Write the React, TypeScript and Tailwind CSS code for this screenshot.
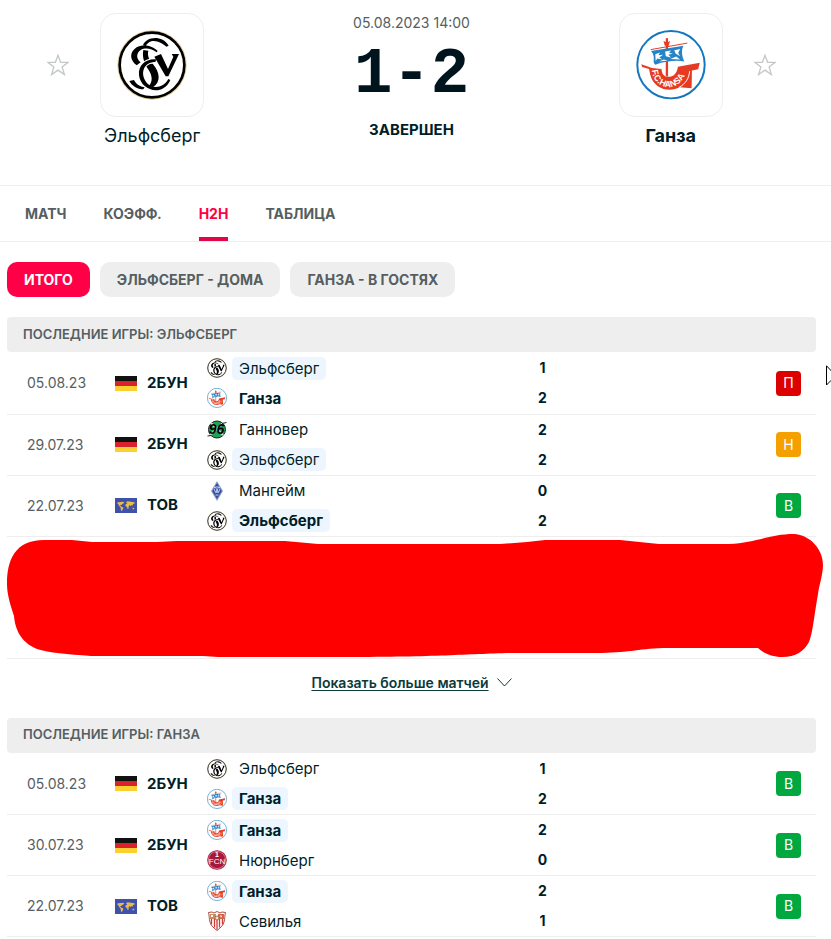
import React, { FC } from 'react'

type CrestName = 'elf' | 'hansa' | 'hannover' | 'mannheim' | 'nurnberg' | 'sevilla'
type Outcome = 'П' | 'Н' | 'В'

type Team = {
  name: string
  crest: CrestName
  score: number
  current?: boolean
  winner?: boolean
}

type Match = {
  date: string
  league: string
  flag: 'de' | 'world'
  teams: Team[]
  outcome: Outcome
}

const elfMatches: Match[] = [
  {
    date: '05.08.23',
    league: '2БУН',
    flag: 'de',
    teams: [
      { name: 'Эльфсберг', crest: 'elf', score: 1, current: true },
      { name: 'Ганза', crest: 'hansa', score: 2, winner: true },
    ],
    outcome: 'П',
  },
  {
    date: '29.07.23',
    league: '2БУН',
    flag: 'de',
    teams: [
      { name: 'Ганновер', crest: 'hannover', score: 2 },
      { name: 'Эльфсберг', crest: 'elf', score: 2, current: true },
    ],
    outcome: 'Н',
  },
  {
    date: '22.07.23',
    league: 'ТОВ',
    flag: 'world',
    teams: [
      { name: 'Мангейм', crest: 'mannheim', score: 0 },
      { name: 'Эльфсберг', crest: 'elf', score: 2, current: true, winner: true },
    ],
    outcome: 'В',
  },
]

const hansaMatches: Match[] = [
  {
    date: '05.08.23',
    league: '2БУН',
    flag: 'de',
    teams: [
      { name: 'Эльфсберг', crest: 'elf', score: 1 },
      { name: 'Ганза', crest: 'hansa', score: 2, current: true, winner: true },
    ],
    outcome: 'В',
  },
  {
    date: '30.07.23',
    league: '2БУН',
    flag: 'de',
    teams: [
      { name: 'Ганза', crest: 'hansa', score: 2, current: true, winner: true },
      { name: 'Нюрнберг', crest: 'nurnberg', score: 0 },
    ],
    outcome: 'В',
  },
  {
    date: '22.07.23',
    league: 'ТОВ',
    flag: 'world',
    teams: [
      { name: 'Ганза', crest: 'hansa', score: 2, current: true, winner: true },
      { name: 'Севилья', crest: 'sevilla', score: 1 },
    ],
    outcome: 'В',
  },
]

const outcomeColor: Record<Outcome, string> = {
  П: 'bg-[#dc0000]',
  Н: 'bg-[#f3a000]',
  В: 'bg-[#00a83f]',
}

const ElfCrest: FC = () => (
  <svg viewBox="5 4 210 210" className="size-full" aria-hidden="true">
    <circle cx="110" cy="109" r="104" fill="#e2cf9f" />
    <circle cx="110" cy="109" r="97" fill="#fff" stroke="#000" strokeWidth="8" />
    <path d="M83 50C92 24 140 18 160 51L153 54C140 44 124 34 108 38C100 40 94 46 91 53Z" />
    <path d="M127 67C112 50 82 45 64 56C42 70 42 94 64 110L76 101C62 90 62 74 76 64C90 56 110 60 124 71Z" />
    <path d="M84 64L99 66C95 82 102 92 112 105C134 130 138 160 112 176L100 172C114 158 110 140 100 124C86 104 80 84 84 64Z" />
    <path
      d="M119 97C92 94 76 114 78 140C80 158 88 168 98 174"
      fill="none"
      stroke="#fff"
      strokeWidth="16"
    />
    <path d="M122 92C90 90 68 110 71 140C76 186 142 206 165 154L159 151C142 184 94 184 84 142C80 118 94 100 121 99Z" />
    <path d="M42 157L56 154C62 166 74 174 88 176L84 182C66 182 50 172 42 157Z" />
    <path d="M117 84L137 76L158 121L174 84L169 76H191L159 143H151Z" />
  </svg>
)

const HansaCrest: FC<{ id: string }> = ({ id }) => (
  <svg viewBox="107 88 214 214" className="size-full" aria-hidden="true">
    <circle cx="214" cy="194" r="103" fill="#fff" stroke="#1277bf" strokeWidth="6" />
    <path d="M198 113H205V230H198Z" fill="#e63b22" />
    <path d="M191 121L197 125L201 121L206 125L211 121L207 136H195Z" fill="#e63b22" />
    <path d="M152 148L264 128" stroke="#e63b22" strokeWidth="3" />
    <path
      d="M153 152L252 136C244 152 248 170 255 184C232 180 200 182 166 194C154 184 170 172 153 152Z"
      fill="#2583c8"
    />
    <path
      d="M166 162l14-5l-4 8l14-1l-12 8l10 6l-16-3l-5 8zM196 154l18-3l-6 7l12 2l-14 4l8 8l-16-4zM224 150l18-4l-6 12l6 10l-14-8zM178 184l14-6l12 3zM212 177l18-8l12 9z"
      fill="#fff"
    />
    <path
      d="M123 193L156 204L185 207C186 224 194 231 205 231C222 231 233 220 235 200L302 188L297 208L278 212L277 266L240 263C213 278 163 273 150 223L147 207L126 201Z"
      fill="#e63b22"
    />
    <path d="M271 214C269 236 258 253 238 264" fill="none" stroke="#fff" strokeWidth="3" />
    <path id={id} d="M155 208C160 280 252 284 264 200" fill="none" />
    <text fill="#fff" className="font-['Liberation_Sans'] text-[27px] font-bold">
      <textPath href={`#${id}`} startOffset="3">
        F.C.HANSA
      </textPath>
    </text>
  </svg>
)

const HannoverCrest: FC = () => (
  <svg viewBox="0 0 20 20" className="size-full" aria-hidden="true">
    <circle cx="10" cy="9.500" r="8.500" fill="#1fa456" stroke="#222" strokeWidth="1" />
    <path d="M3 15L16 3M4 3L16 15" stroke="#bfe5cd" strokeWidth="2" />
    <path d="M.5 16L4 15.500M15 3.500L19.500 2.500" stroke="#222" strokeWidth="1" />
    <text
      x="9.500"
      y="14"
      textAnchor="middle"
      fill="#000"
      className="font-['Liberation_Sans'] text-[14px] font-bold italic"
    >
      96
    </text>
  </svg>
)

const MannheimCrest: FC = () => (
  <svg viewBox="0 0 20 20" className="size-full" aria-hidden="true">
    <path d="M10 0L16 10L10 20L4 10Z" fill="#8fa0d2" />
    <path d="M10 2L14.800 10L10 18L5.200 10Z" fill="#32509f" />
    <path d="M7 8l2 4l1-4l1 4l2-4M10 5v3M8.500 14h3" fill="none" stroke="#c4cfec" strokeWidth="1" />
    <circle cx="8" cy="6.500" r="1" fill="#c4cfec" />
    <circle cx="12" cy="6.500" r="1" fill="#c4cfec" />
  </svg>
)

const NurnbergCrest: FC = () => (
  <svg viewBox="0 0 20 20" className="size-full" aria-hidden="true">
    <circle cx="10" cy="10" r="9.800" fill="#a9173a" />
    <circle cx="10" cy="10" r="8.600" fill="none" stroke="#e6b8c4" strokeWidth=".6" />
    <g fill="#fff" textAnchor="middle">
      <text x="10" y="7" className="font-['Liberation_Sans'] text-[7px] font-bold">
        1
      </text>
      <text x="10" y="14" className="font-['Liberation_Sans'] text-[8px]">
        FCN
      </text>
    </g>
  </svg>
)

const SevillaCrest: FC = () => (
  <svg viewBox="0 0 20 20" className="size-full" aria-hidden="true">
    <path
      d="M1.500 1.500L5 1L7 2L10 .5L13 2L15 1L18.500 1.500C17.500 5 18 8 17 11C16 15 13 17 10 19.500C7 17 4 15 3 11C2 8 2.500 5 1.500 1.500Z"
      fill="#fff"
      stroke="#a33b2c"
      strokeWidth=".9"
    />
    <path d="M4.500 8V13.500M7.500 8V16.500M10 8V18.500M12.500 8V16.500M15.500 8V13.500" stroke="#d33a35" strokeWidth="1.300" />
    <path d="M3 3H9V8H3Z" fill="#c98c62" />
    <path d="M11 3H17V8H11Z" fill="#d8614e" />
    <circle cx="10" cy="7" r="2" fill="#f3e3c0" stroke="#8d4a2a" strokeWidth=".7" />
    <path d="M4 4h2v2H4zM13 4l2 1l-1 2z" fill="#fff" />
  </svg>
)

const Crest: FC<{ name: CrestName; id: string }> = ({ name, id }) => {
  switch (name) {
    case 'elf':
      return <ElfCrest />
    case 'hansa':
      return <HansaCrest id={id} />
    case 'hannover':
      return <HannoverCrest />
    case 'mannheim':
      return <MannheimCrest />
    case 'nurnberg':
      return <NurnbergCrest />
    case 'sevilla':
      return <SevillaCrest />
  }
}

const Flag: FC<{ type: Match['flag'] }> = ({ type }) =>
  type === 'de' ? (
    <svg viewBox="0 0 22 15" className="h-[15px] w-[22px] shrink-0" aria-hidden="true">
      <path d="M0 0H22V5H0Z" fill="#111" />
      <path d="M0 5H22V10H0Z" fill="#d8232a" />
      <path d="M0 10H22V15H0Z" fill="#fdd032" />
    </svg>
  ) : (
    <svg viewBox="0 0 66 45" className="h-[15px] w-[22px] shrink-0" aria-hidden="true">
      <path d="M0 0H66V45H0Z" fill="#3f51ab" />
      <path
        d="M5 15L10 13L25 11L28 14L22 18L18 22L14 20L19 26L24 28L25 31L21 38L18 38L17 29L12 23L9 17ZM33 13L38 10L48 11L58 13L60 16L54 18L53 23L49 21L47 25L44 21L41 25L41 31L38 34L36 27L31 24L32 19L37 17ZM52 30L57 29L58 34L53 34Z"
        fill="#e6bd4d"
      />
    </svg>
  )

const FavouriteButton: FC<{ team: string }> = ({ team }) => (
  <button type="button" aria-label={`Добавить в избранное: ${team}`}>
    <svg viewBox="0 0 22 22" className="size-[22px]" fill="none" stroke="#c3c7c8" strokeWidth="1.300">
      <path d="M11 1.200L13.600 8.300H21.200L15.100 12.900L17.400 20.600L11 16.100L4.600 20.600L6.900 12.900L.8 8.300H8.400Z" />
    </svg>
  </button>
)

const HeaderTeam: FC<{ name: string; winner?: boolean; children: React.ReactNode }> = ({
  name,
  winner,
  children,
}) => (
  <div className="flex flex-col items-center">
    <div className="flex size-[104px] items-center justify-center rounded-2xl border border-[#eee]">
      <div className="size-[70px]">{children}</div>
    </div>
    <a
      href="#team"
      className={
        winner
          ? 'mt-[7px] text-lg leading-6 font-bold'
          : 'mt-[7px] text-lg leading-6'
      }
    >
      {name}
    </a>
  </div>
)

const MatchRow: FC<{ match: Match; id: string }> = ({ match, id }) => (
  <tr className="border-b border-[#eee]">
    <td className="h-[61px] pl-5 text-sm text-[#555e61]">{match.date}</td>
    <td>
      <div className="flex items-center gap-2.5 text-[15px] font-bold">
        <Flag type={match.flag} />
        {match.league}
      </div>
    </td>
    <td>
      {match.teams.map((team, i) => (
        <div key={team.name} className="flex h-[30px] items-center gap-[5px]">
          <span className="size-5 shrink-0">
            <Crest name={team.crest} id={`${id}-${i}`} />
          </span>
          <span
            className={`rounded-[5px] px-[7px] text-[15px] leading-[23px] ${team.current ? 'bg-[#edf6ff]' : ''} ${
              team.winner ? 'font-bold' : ''
            }`}
          >
            {team.name}
          </span>
        </div>
      ))}
    </td>
    <td className="text-center text-sm leading-[30px] font-bold">
      {match.teams.map((team) => (
        <div key={team.name}>{team.score}</div>
      ))}
    </td>
    <td className="pr-[15px]">
      <div
        className={`ml-auto flex size-[25px] items-center justify-center rounded text-sm text-white ${outcomeColor[match.outcome]}`}
      >
        {match.outcome}
      </div>
    </td>
  </tr>
)

const Scribble: FC = () => (
  <tr className="border-b border-[#eee]">
    <td colSpan={5} className="relative h-[122px]">
      <svg
        viewBox="0 0 816 124"
        preserveAspectRatio="none"
        className="absolute -top-[3px] left-0 h-[124px] w-[calc(100%+7px)]"
        aria-hidden="true"
      >
        <path
          d="M37 6H65L85 8H150L170 7H278L311 10H493L520 8L538 6H613L652 10H722C750 9 762 0 787 0C803 1 816 15 816 31C816 40 812 52 811 60C807 82 806 98 802 108C797 117 789 123 775 123C765 123 756 119 751 114H656C630 115 620 119 589 119H503C460 120 430 123 338 123H211L196 122H84C60 120 42 119 30 115C13 108 8 94 7 82C3 70 0 60 0 50C0 26 8 6 37 6Z"
          fill="#f00"
        />
      </svg>
    </td>
  </tr>
)

const MatchSection: FC<{ title: string; id: string; matches: Match[]; children?: React.ReactNode }> = ({
  title,
  id,
  matches,
  children,
}) => (
  <section>
    <h2 className="mb-px flex h-[35px] items-center rounded bg-[#eee] px-4 text-[13px] font-semibold text-[#555e61] uppercase">
      {title}
    </h2>
    <table className="w-full table-fixed" aria-label={title}>
      <colgroup>
        <col className="w-[108px]" />
        <col className="w-[92px]" />
        <col className="w-[38%]" />
        <col className="w-14" />
        <col />
      </colgroup>
      <tbody>
        {matches.map((match, i) => (
          <MatchRow key={match.date} match={match} id={`${id}-${i}`} />
        ))}
        {children}
      </tbody>
    </table>
  </section>
)

const tabs = ['Матч', 'Коэфф.', 'H2H', 'Таблица']
const filters = ['Итого', 'Эльфсберг - Дома', 'Ганза - В гостях']

export default function App() {
  return (
    <div className="relative overflow-x-hidden bg-white font-['Inter','Noto_Sans',sans-serif] text-[#001e28]">
      <header className="grid grid-cols-[37fr_26fr_37fr] pt-[13px] pr-2">
        <div className="grid grid-cols-[1fr_104px_1fr]">
          <div className="flex h-[104px] items-center justify-end pr-[31px]">
            <FavouriteButton team="Эльфсберг" />
          </div>
          <HeaderTeam name="Эльфсберг">
            <ElfCrest />
          </HeaderTeam>
        </div>
        <div className="flex flex-col items-center">
          <time className="text-sm leading-5 text-[#555e61]">05.08.2023 14:00</time>
          <div className="mt-1 font-['Liberation_Mono',monospace] text-[64px] leading-[76px] font-bold text-[#00141e]">
            1-2
          </div>
          <div className="mt-[7px] text-[15px] leading-5 font-bold uppercase">Завершен</div>
        </div>
        <div className="grid grid-cols-[1fr_104px_1fr]">
          <div className="col-start-2">
            <HeaderTeam name="Ганза" winner>
              <HansaCrest id="header-hansa" />
            </HeaderTeam>
          </div>
          <div className="flex h-[104px] items-center pl-[31px]">
            <FavouriteButton team="Ганза" />
          </div>
        </div>
      </header>

      <nav className="mt-[37px] flex h-[57px] gap-[37px] border-y border-[#eee] px-[25px] text-sm font-bold text-[#555e61] uppercase">
        {tabs.map((tab) => (
          <a
            key={tab}
            href="#tab"
            className={
              tab === 'H2H'
                ? 'flex items-center rounded-t-sm border-t-4 border-b-4 border-t-transparent border-b-[#e00747] text-[#ff0046]'
                : 'flex items-center'
            }
          >
            {tab}
          </a>
        ))}
      </nav>

      <main className="pr-[15px] pl-[7px]">
        <div className="my-5 flex gap-2.5">
          {filters.map((filter, i) => (
            <button
              key={filter}
              type="button"
              className={`h-[35px] rounded-[10px] px-[17px] text-sm font-bold uppercase ${
                i === 0 ? 'bg-[#ff0046] text-white' : 'bg-[#eee] text-[#555e61]'
              }`}
            >
              {filter}
            </button>
          ))}
        </div>

        <MatchSection title="Последние игры: Эльфсберг" id="elf" matches={elfMatches}>
          <Scribble />
        </MatchSection>

        <div className="flex justify-center pt-3.5 pb-[25px]">
          <a href="#more" className="flex items-center gap-2 text-sm leading-5 font-semibold text-[#0c3a3a]">
            <span className="underline underline-offset-2">Показать больше матчей</span>
            <svg viewBox="0 0 15 9" className="h-[9px] w-[15px]" fill="none" stroke="currentColor" aria-hidden="true">
              <path d="M.5 .5L7.500 8L14.500 .5" />
            </svg>
          </a>
        </div>

        <MatchSection title="Последние игры: Ганза" id="hansa" matches={hansaMatches} />
      </main>

      {/* mouse pointer at the edge of the page */}
      <svg
        viewBox="0 0 14 21"
        className="absolute top-[365px] -right-[9px] h-[21px] w-[14px]"
        fill="#fff"
        stroke="#000"
        aria-hidden="true"
      >
        <path d="M.5 .8V20L5 15.500L8 20.500L10.500 19L8 14.500H13.500Z" />
      </svg>
    </div>
  )
}
